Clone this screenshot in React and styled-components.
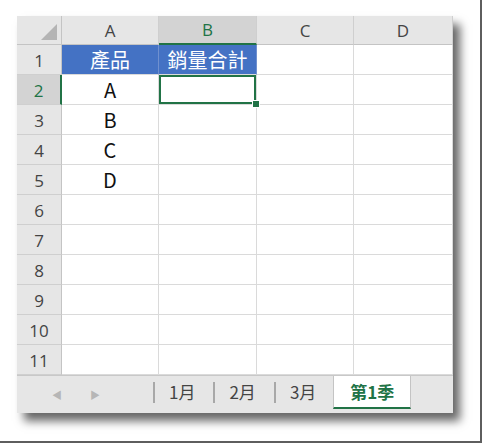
import React from 'react';
import styled, { createGlobalStyle } from 'styled-components';

const GlobalStyle = createGlobalStyle`
    html, body {
        margin: 0;
        padding: 0;
        background: #ffffff;
    }
    body {
        font-family: "Noto Sans CJK TC", "Noto Sans", sans-serif;
    }
`

const Page = styled.div`
    box-sizing: border-box;
    width: 482px;
    height: 443px;
    padding: 16px 0 0 17px;
    border-right: 2px solid #5e5e5e;
    border-bottom: 2px solid #5e5e5e;
    background: #ffffff;
`

const Sheet = styled.div`
    width: 436px;
    background: #ffffff;
    box-shadow: 7px 8px 9px rgba(0, 0, 0, 0.6);
`

const Grid = styled.div`
    display: grid;
    grid-template-columns: 45px 97px 98px 97px 99px;
    grid-template-rows: 29px;
    grid-auto-rows: 30px;
`

const Corner = styled.div`
    position: relative;
    background: #e6e6e6;
    border-right: 1px solid #c4c4c4;
    border-bottom: 1px solid #c4c4c4;
    &::after {
        content: '';
        position: absolute;
        right: 4px;
        bottom: 4px;
        border-style: solid;
        border-width: 0 0 16px 16px;
        border-color: transparent transparent #b4b4b4 transparent;
    }
`

const ColHead = styled.div`
    display: flex;
    align-items: center;
    justify-content: center;
    box-sizing: border-box;
    background: ${p => (p.$active ? '#d3d3d3' : '#e6e6e6')};
    color: ${p => (p.$active ? '#217346' : '#444444')};
    border-right: 1px solid #cfcfcf;
    border-bottom: ${p => (p.$active ? '2px solid #217346' : '1px solid #c4c4c4')};
    font-family: "Open Sans", "Noto Sans", sans-serif;
    font-size: 17px;
`

const RowHead = styled.div`
    display: flex;
    align-items: center;
    justify-content: center;
    box-sizing: border-box;
    padding-top: 2px;
    background: ${p => (p.$active ? '#d3d3d3' : '#e6e6e6')};
    color: ${p => (p.$active ? '#217346' : '#444444')};
    border-right: ${p => (p.$active ? '2px solid #217346' : '1px solid #c4c4c4')};
    border-bottom: 1px solid #cfcfcf;
    font-family: "Open Sans", "Noto Sans", sans-serif;
    font-size: 17px;
`

const Cell = styled.div`
    position: relative;
    display: flex;
    align-items: center;
    justify-content: center;
    box-sizing: border-box;
    background: ${p => (p.$head ? '#4472c4' : '#ffffff')};
    color: ${p => (p.$head ? '#ffffff' : '#111111')};
    border-right: 1px solid ${p => (p.$head ? '#6f90cf' : '#dadada')};
    border-bottom: 1px solid #dadada;
    box-shadow: ${p => (p.$selected ? 'inset 0 0 0 2px #217346' : 'none')};
    font-family: "Noto Sans CJK TC", "Noto Sans", sans-serif;
    font-size: 20px;
    line-height: 1;
`

const Handle = styled.span`
    position: absolute;
    right: -4px;
    bottom: -4px;
    width: 6px;
    height: 6px;
    background: #217346;
    border: 1px solid #ffffff;
    z-index: 2;
`

const TabBar = styled.div`
    display: flex;
    align-items: stretch;
    height: 38px;
    box-sizing: border-box;
    background: #e6e6e6;
    border-top: 1px solid #c8c8c8;
`

const Nav = styled.div`
    display: flex;
    align-items: center;
    gap: 28px;
    width: 135px;
    box-sizing: border-box;
    padding-left: 35px;
    color: #b6b6b6;
    font-size: 10px;
`

const Tab = styled.div`
    display: flex;
    align-items: center;
    position: relative;
    padding: 0 16px;
    margin-bottom: 4px;
    font-family: "Noto Sans CJK TC", "Noto Sans", sans-serif;
    font-size: 17px;
    color: ${p => (p.$active ? '#217346' : '#444444')};
    font-weight: ${p => (p.$active ? 600 : 400)};
    background: ${p => (p.$active ? '#ffffff' : 'transparent')};
    border-bottom: 2px solid ${p => (p.$active ? '#217346' : 'transparent')};
    border-left: 1px solid ${p => (p.$active ? '#c4c4c4' : 'transparent')};
    border-right: 1px solid ${p => (p.$active ? '#c4c4c4' : 'transparent')};
    &::before {
        content: '';
        display: ${p => (p.$active ? 'none' : 'block')};
        position: absolute;
        left: 0;
        top: 6px;
        bottom: 4px;
        width: 2px;
        background: #a8a8a8;
    }
`

const columns = ['A', 'B', 'C', 'D'];
const items = ['A', 'B', 'C', 'D'];
const tabs = ['1月', '2月', '3月', '第1季'];

function App() {
    const rows = Array.from({ length: 11 }, (_, i) => i + 1);
    return (
        <Page>
            <GlobalStyle />
            <Sheet>
                <Grid>
                    <Corner />
                    {columns.map(c => (
                        <ColHead key={c} $active={c === 'B'}>{c}</ColHead>
                    ))}
                    {rows.map(r => (
                        <React.Fragment key={r}>
                            <RowHead $active={r === 2}>{r}</RowHead>
                            {columns.map(c => {
                                if (r === 1 && c === 'A') return <Cell key={c} $head>產品</Cell>
                                if (r === 1 && c === 'B') return <Cell key={c} $head>銷量合計</Cell>
                                if (r === 2 && c === 'B') return <Cell key={c} $selected><Handle /></Cell>
                                if (c === 'A' && r >= 2 && r <= 5) return <Cell key={c}>{items[r - 2]}</Cell>
                                return <Cell key={c} />
                            })}
                        </React.Fragment>
                    ))}
                </Grid>
                <TabBar>
                    <Nav>
                        <span>◀</span>
                        <span>▶</span>
                    </Nav>
                    {tabs.map(t => (
                        <Tab key={t} $active={t === '第1季'}>{t}</Tab>
                    ))}
                </TabBar>
            </Sheet>
        </Page>
    )
}

export default App;
